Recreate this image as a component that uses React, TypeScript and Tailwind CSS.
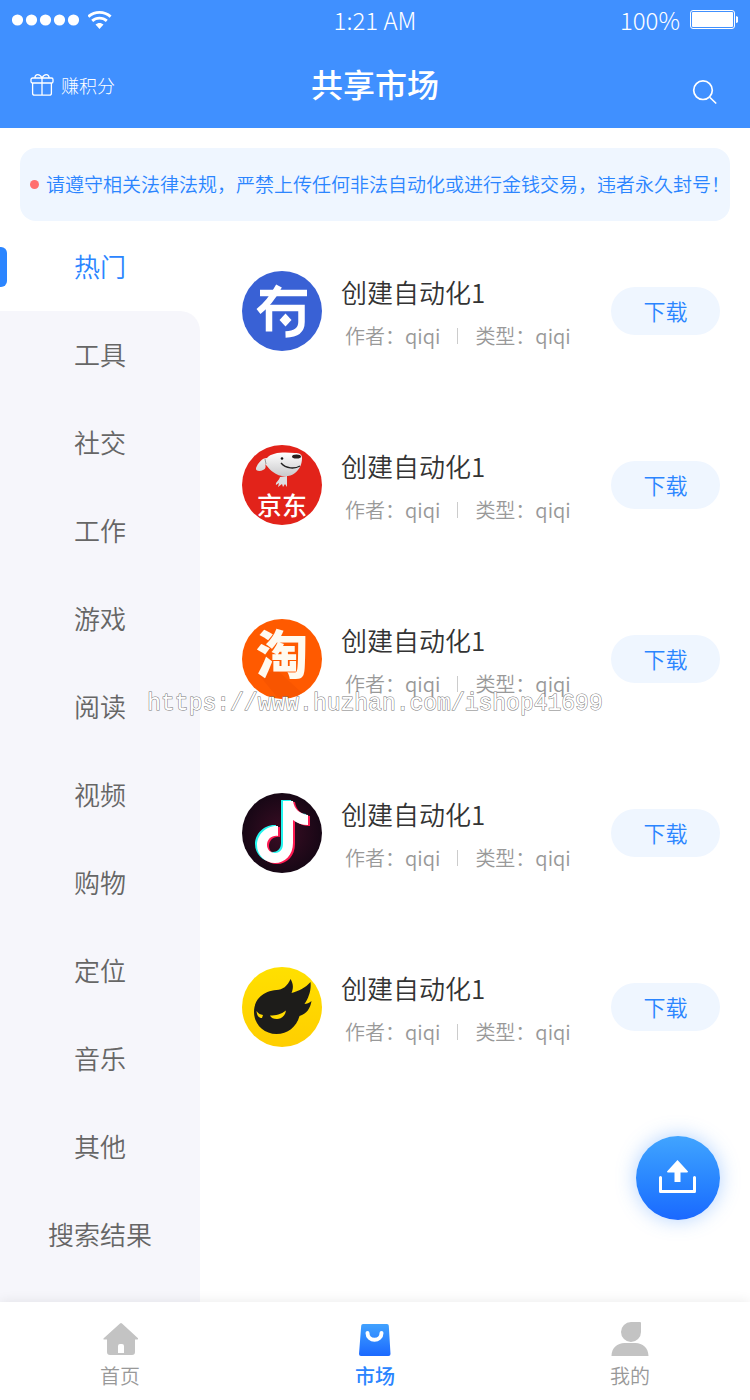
import type { ReactNode } from "react";

const categories = ["热门", "工具", "社交", "工作", "游戏", "阅读", "视频", "购物", "定位", "音乐", "其他", "搜索结果"];

function StatusBar() {
  return (
    <div className="grid h-10 grid-cols-3 items-center px-3 text-2xl font-light leading-9">
      <div className="flex items-center gap-2">
        <svg width="68" height="12" viewBox="0 0 68 12" fill="white" aria-hidden="true">
          <circle cx="5.5" cy="6" r="5.6" />
          <circle cx="19.5" cy="6" r="5.6" />
          <circle cx="33.5" cy="6" r="5.6" />
          <circle cx="47.5" cy="6" r="5.6" />
          <circle cx="61.5" cy="6" r="5.6" />
        </svg>
        <svg width="24" height="20" viewBox="0 0 24 20" fill="none" stroke="white" strokeWidth="2.8" aria-hidden="true">
          <path d="M.4 6.600C6.700.9 16.300.9 22.600 6.600" />
          <path d="M4.200 10.900c4.200-3.800 10.400-3.800 14.600 0" />
          <path d="M7.500 14.600c2.300-2.200 5.700-2.200 8 0L11.500 19Z" fill="white" stroke="none" />
        </svg>
      </div>
      <span className="text-center">1:21 AM</span>
      <div className="flex items-center justify-end gap-2">
        <span>100%</span>
        <svg width="50" height="20" viewBox="0 0 50 20" aria-hidden="true">
          <rect x="2.500" y=".5" width="44" height="18" rx="2.5" fill="none" stroke="white" />
          <rect x="4" y="2" width="41" height="15" rx="1" fill="white" />
          <path d="M48 6c4 1 4 6 0 7Z" fill="white" />
        </svg>
      </div>
    </div>
  );
}

function Header() {
  return (
    <header className="bg-[#4090ff] text-white">
      <StatusBar />
      <div className="grid h-[88px] grid-cols-3 items-center px-[30px]">
        <a href="#points" className="flex items-center gap-[7px] pt-[2px] text-lg font-light">
          <svg width="24" height="24" viewBox="0 0 24 24" fill="none" stroke="white" strokeWidth="1.3" strokeLinejoin="round" aria-hidden="true">
            <rect x="1" y="5" width="22" height="5" rx="1.6" />
            <path d="M2.600 10v10.200q0 2 2 2h14.800q2 0 2-2V10M12 5v17" />
            <path d="M5 5C4.800 2.600 6.200 1.700 7.700 1.700S11 3 12 5c1-2 2.800-3.300 4.300-3.300S19.200 2.600 19 5" />
          </svg>
          赚积分
        </a>
        <h1 className="pb-[2px] text-center text-[32px] font-medium leading-10">共享市场</h1>
        <button type="button" aria-label="搜索" className="flex h-[72px] items-center self-end justify-self-end px-[2px]">
          <svg width="26" height="26" viewBox="0 0 26 26" fill="none" stroke="white" strokeWidth="1.7" strokeLinecap="round" aria-hidden="true">
            <circle cx="11" cy="11.200" r="9.300" />
            <path d="m18.500 19 5.200 5" />
          </svg>
        </button>
      </div>
    </header>
  );
}

function AliasLogo() {
  return (
    <svg viewBox="0 0 80 80" className="size-20 shrink-0" aria-hidden="true">
      <circle cx="40" cy="40" r="40" fill="#3961d5" />
      <g fill="none" stroke="white" strokeWidth="6.500">
        <path d="M18 22h47" />
        <path d="M37 15C31 26 25 34 16.500 40.500" />
        <path d="M27 60.500V37h32.500v14q0 12-16 12.500" />
      </g>
      <path d="m43.500 42.500 6 6.500-6 6.500-6-6.500Z" fill="white" />
    </svg>
  );
}

function JdLogo() {
  return (
    <svg viewBox="0 0 80 80" className="size-20 shrink-0 overflow-visible" aria-hidden="true">
      <defs>
        <linearGradient id="dog" x1="0" y1="0" x2="0" y2="1">
          <stop offset="0" stopColor="#fff" />
          <stop offset="1" stopColor="#c9c9cb" />
        </linearGradient>
      </defs>
      <circle cx="40" cy="40" r="40" fill="#e2231a" />
      <path d="M25 13C20 13 16 18 14 23c-1 3 4 4 7 2 3-1 3-4 2-6 3 3 4 5 8 8 6 5 16 6 22 1 5-4 7-9 7-15 0-4-3-5-7-5-11-1-23-1-28 5Z" fill="url(#dog)" />
      <path d="m23 14 1 5" stroke="#999" strokeWidth="1" />
      <ellipse cx="54.500" cy="11.500" rx="4.500" ry="2" fill="#28201f" />
      <circle cx="40" cy="13.500" r="1.300" fill="#111" />
      <path d="M39 18c5 6 14 6 19 3" fill="none" stroke="#222" strokeWidth="1.300" />
      <path d="M38 32c-1 4-5 5-4 8l3-2-1 4 4-3 1 3 2-3 2 3V31Z" fill="#dedee0" />
      <text x="40" y="70" textAnchor="middle" fontSize="25" fontWeight="500" fill="white">京东</text>
    </svg>
  );
}

function TaoLogo() {
  return (
    <svg viewBox="0 0 80 80" className="size-20 shrink-0 overflow-visible" aria-hidden="true">
      <circle cx="40" cy="40" r="40" fill="#ff5a00" />
      <path d="m17 56 19 23c8 1 17-1 24-5L35 51Z" fill="#f85500" />
      <text x="40" y="55" textAnchor="middle" fontSize="52" fontWeight="900" fill="#fffaf0">淘</text>
    </svg>
  );
}

function TiktokLogo() {
  const note = "M40 8h10c1 8 7 13 15 14v10c-6 0-11-2-15-5v23c0 12-8 20-18 20S14 62 14 52s9-20 21-19v10c-6-1-11 3-11 9 0 5 4 8 8 8s8-3 8-9Z";
  return (
    <svg viewBox="0 0 80 80" className="size-20 shrink-0" aria-hidden="true">
      <defs>
        <radialGradient id="night">
          <stop offset="0" stopColor="#3b0d24" />
          <stop offset="1" stopColor="#170715" />
        </radialGradient>
      </defs>
      <circle cx="40" cy="40" r="40" fill="url(#night)" />
      <path d={note} fill="#25f4ee" transform="translate(-1 -1)" />
      <path d={note} fill="#fe1b52" transform="translate(3 1)" />
      <path d={note} fill="white" transform="translate(1 0)" />
    </svg>
  );
}

function FlameLogo() {
  return (
    <svg viewBox="0 0 80 80" className="size-20 shrink-0" aria-hidden="true">
      <defs>
        <linearGradient id="sun" x1="0" y1="0" x2="0" y2="1">
          <stop offset="0" stopColor="#ffe000" />
          <stop offset="1" stopColor="#ffce00" />
        </linearGradient>
      </defs>
      <circle cx="40" cy="40" r="40" fill="url(#sun)" />
      <path d="M48.500 12c3 5 3 9 1 14 7-2 14-5 19-11 1 8-2 16-6 22 2 0 5-1 7-3-1 7-5 13-12 15-3 11-12 18-23 18-13 0-22.500-10-22.500-22 0-13 9.500-21 22.500-22 6 0 11-4 14-11Z" fill="#1d1c1a" />
      <path d="M14.500 44c2 3 4 3.500 6.500 4l-1 3c-3 0-5-2-5.500-7ZM28 48.500c6 0 11-1 16-5-1 6-5 8.500-9 8.500s-6-1.500-7-3.500Z" fill="#ffda00" />
    </svg>
  );
}

const apps: { id: string; logo: ReactNode }[] = [
  { id: "alias", logo: <AliasLogo /> },
  { id: "jd", logo: <JdLogo /> },
  { id: "tao", logo: <TaoLogo /> },
  { id: "note", logo: <TiktokLogo /> },
  { id: "flame", logo: <FlameLogo /> },
];

function CategoryList() {
  return (
    <nav className="flex w-[200px] shrink-0 flex-col text-[26px] font-[350] text-[#666]">
      <a href="#hot" className="flex h-[88px] items-center text-[#2b85ff]">
        <span className="h-10 w-[7px] rounded-r-md bg-[#2b85ff]" />
        <span className="flex-1 pb-[3px] pr-[7px] text-center">{categories[0]}</span>
      </a>
      <div className="flex-1 rounded-tr-[20px] bg-[#f6f6fb]">
        {categories.slice(1).map((name) => (
          <a key={name} href={`#${name}`} className="flex h-[88px] items-center justify-center pb-[3px]">
            {name}
          </a>
        ))}
      </div>
    </nav>
  );
}

function AppRow({ logo }: { logo: ReactNode }) {
  return (
    <li className="flex h-[174px] items-center gap-[19px]">
      {logo}
      <div className="flex-1 whitespace-nowrap pt-[5px]">
        <h2 className="text-[26px] font-[350] leading-[44px] text-[#333]">创建自动化1</h2>
        <p className="flex items-center gap-[17px] pl-1 text-xl font-[350] leading-[44px] text-[#999]">
          <span>作者：qiqi</span>
          <span className="h-4 w-px bg-[#ccc]" />
          <span>类型：qiqi</span>
        </p>
      </div>
      <button type="button" className="h-12 w-[109px] rounded-full bg-[#eff6ff] pb-[2px] text-[22px] font-[350] text-[#2b85ff]">
        下载
      </button>
    </li>
  );
}

function TabBar() {
  return (
    <nav className="relative flex h-[98px] justify-between bg-white px-20 text-xl font-[350] leading-6 text-[#999] shadow-[0_0_12px_rgba(0,0,0,0.09)]">
      <a href="#home" className="flex w-20 flex-col items-center gap-2 pt-[18px]">
        <svg width="36" height="36" viewBox="0 0 36 36" fill="#c3c3c3" aria-hidden="true">
          <path fillRule="evenodd" d="M18 3.500q1-.9 2 0l16 14.700q.8 1.300-.8 1.300H33V32q0 3-3 3H8q-3 0-3-3V19.500H2.500q-1.800 0-.8-1.300ZM18 24q-2 0-2 2v7h6v-7q0-2-2-2Z" />
        </svg>
        首页
      </a>
      <a href="#market" className="flex w-20 flex-col items-center gap-2 pt-[18px] font-medium text-[#2b85ff]">
        <svg width="36" height="36" viewBox="0 0 36 36" aria-hidden="true">
          <defs>
            <linearGradient id="bag" x1="0" y1="0" x2="0" y2="1">
              <stop offset="0" stopColor="#41a2ff" />
              <stop offset="1" stopColor="#1b69ff" />
            </linearGradient>
          </defs>
          <path d="M6 4h24q1.700 0 1.800 1.700L33.500 34q0 2-2 2H4q-2 0-2-2L4.200 5.700Q4.300 4 6 4Z" fill="url(#bag)" />
          <path d="M10.500 13c0 9 14 9 14 0" fill="none" stroke="white" strokeWidth="4" strokeLinecap="round" />
        </svg>
        市场
      </a>
      <a href="#mine" className="flex w-20 flex-col items-center gap-2 pt-[18px]">
        <svg width="38" height="36" viewBox="0 0 38 36" fill="#c3c3c3" aria-hidden="true">
          <path d="M20 2h9q1 0 1 1v9a10 10 0 1 1-10-10ZM.5 36c0-8 6-13 13-13h11c7 0 13 5 13 13Z" />
        </svg>
        我的
      </a>
    </nav>
  );
}

export default function App() {
  return (
    <div className="relative flex min-h-screen flex-col bg-white font-['Noto_Sans_CJK_SC',sans-serif]">
      <Header />
      <p className="mx-5 mt-5 flex h-[73px] items-center gap-[7px] whitespace-nowrap rounded-2xl bg-[#eff6ff] pl-[10px] text-[19px] font-[350] text-[#2b85ff]">
        <span className="size-[9px] shrink-0 rounded-full bg-[#ff7070]" />
        请遵守相关法律法规，严禁上传任何非法自动化或进行金钱交易，违者永久封号！
      </p>
      <div className="mt-[2px] flex flex-1">
        <CategoryList />
        <main className="flex-1 pl-[42px] pr-[30px] pt-px">
          <ul>
            {apps.map((app) => (
              <AppRow key={app.id} logo={app.logo} />
            ))}
          </ul>
        </main>
      </div>
      <TabBar />
      <button
        type="button"
        aria-label="上传"
        className="absolute bottom-[180px] right-[30px] flex size-[84px] items-center justify-center rounded-full bg-linear-to-b from-[#41a4ff] to-[#1b68ff] shadow-[0_0_20px_rgba(64,144,255,0.4)]"
      >
        <svg width="40" height="36" viewBox="0 0 40 36" fill="none" stroke="white" aria-hidden="true">
          <path d="M2.500 17.500V31.500h34V17.500" strokeWidth="3" strokeLinecap="round" strokeLinejoin="round" />
          <path d="M19.500 0 30 11.500q0 1-1 1h-6.500V22h-6v-9.500H10q-1 0-1-1Z" fill="white" stroke="none" />
        </svg>
      </button>
      <p className="pointer-events-none absolute inset-x-0 top-1/2 -mt-3 text-center font-['Liberation_Mono',monospace] text-[23px] leading-8 text-white [-webkit-text-stroke:1px_#777] [paint-order:stroke]">
        https://www.huzhan.com/ishop41699
      </p>
    </div>
  );
}
